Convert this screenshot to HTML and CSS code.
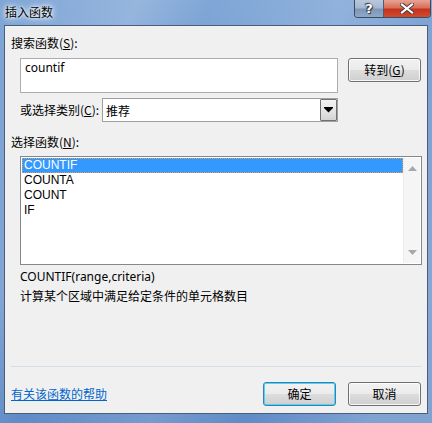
FILE: index.html
```html
<!DOCTYPE html>
<html>
<head>
<meta charset="utf-8">
<link rel="stylesheet" href="styles.css">
</head>
<body>
<div class="window">
  <div class="titlebar">
    <span class="title">插入函数</span>
    <div class="caption-btns">
      <div class="cap help"><span>?</span></div>
      <div class="cap close"><svg width="14" height="11" viewBox="0 0 14 11"><path d="M2 1.5 L12 9.5 M12 1.5 L2 9.5" stroke="#4a3a3a" stroke-width="4" stroke-linecap="square"/><path d="M2 1.5 L12 9.5 M12 1.5 L2 9.5" stroke="#fff" stroke-width="2.2" stroke-linecap="square"/></svg></div>
    </div>
  </div>
  <div class="panel">
    <div class="label top-label">搜索函数(<u>S</u>):</div>
    <div class="search-row">
      <div class="textbox">countif</div>
      <div class="btn go">转到(<u>G</u>)</div>
    </div>
    <div class="cat-row">
      <span class="cat-label">或选择类别(<u>C</u>):</span>
      <div class="select">
        <span class="select-text">推荐</span>
        <div class="drop"><svg width="9" height="6" viewBox="0 0 9 6"><path d="M0 0 H9 V1 L4.5 5.5 L0 1 Z" fill="#000"/></svg></div>
      </div>
    </div>
    <div class="label list-label">选择函数(<u>N</u>):</div>
    <div class="listbox">
      <div class="items">
        <div class="item sel">COUNTIF</div>
        <div class="item">COUNTA</div>
        <div class="item">COUNT</div>
        <div class="item">IF</div>
      </div>
      <div class="vscroll">
        <svg width="9" height="5" viewBox="0 0 9 5"><path d="M0 5 L4.5 0 L9 5 Z" fill="#a8a8a8"/></svg>
        <svg width="9" height="5" viewBox="0 0 9 5"><path d="M0 0 L4.5 5 L9 0 Z" fill="#a8a8a8"/></svg>
      </div>
    </div>
    <div class="desc">
      <div class="syntax">COUNTIF(range,criteria)</div>
      <div class="explain">计算某个区域中满足给定条件的单元格数目</div>
    </div>
    <div class="sep"></div>
    <div class="bottom-row">
      <span class="link">有关该函数的帮助</span>
      <div class="btns">
        <div class="btn ok">确定</div>
        <div class="btn">取消</div>
      </div>
    </div>
  </div>
</div>
</body>
</html>
```

FILE: styles.css
```css
html, body {
  margin: 0;
  padding: 0;
}
body {
  width: 432px;
  height: 423px;
  overflow: hidden;
  font-family: "Noto Sans", "Noto Sans CJK SC", sans-serif;
  font-size: 12px;
  color: #000;
}
.window {
  width: 432px;
  height: 423px;
  box-sizing: border-box;
  padding: 0 4px 9px 4px;
  display: flex;
  flex-direction: column;
  background:
    linear-gradient(115deg, rgba(255,255,255,0) 0%, rgba(255,255,255,0.18) 22%, rgba(255,255,255,0) 34%, rgba(255,255,255,0.14) 55%, rgba(255,255,255,0) 70%, rgba(255,255,255,0.2) 90%),
    linear-gradient(180deg, #7fa6d6 0%, #6f98cf 40%, #5f8bc6 100%);
}
.titlebar {
  height: 25px;
  flex: none;
  display: flex;
  align-items: flex-start;
  justify-content: space-between;
}
.title {
  margin: 4px 0 0 1px;
  font-family: "Noto Sans CJK SC", sans-serif;
  font-size: 12px;
  line-height: 16px;
  color: #000;
  text-shadow: 0 0 6px #fff, 0 0 3px #fff, 0 0 8px rgba(255,255,255,0.8);
}
.caption-btns {
  display: flex;
  margin-right: -3px;
  height: 17px;
  border: 1px solid #3b4b62;
  border-top: none;
  border-radius: 0 0 4px 4px;
  overflow: hidden;
}
.cap {
  height: 17px;
  display: flex;
  align-items: center;
  justify-content: center;
}
.cap.help {
  width: 28px;
  background: linear-gradient(180deg, #b9c9dc 0%, #a4b8d0 45%, #7f97b5 55%, #8ea8c6 100%);
  border-right: 1px solid #4c5c72;
}
.cap.help span {
  font-family: "DejaVu Sans", sans-serif;
  font-weight: bold;
  font-size: 13px;
  color: #fff;
  text-shadow: 0 0 1px #334, 1px 1px 1px #334, -1px -1px 1px #334;
  line-height: 17px;
}
.cap.close {
  width: 46px;
  background: linear-gradient(180deg, #e8a393 0%, #d8705c 45%, #c2341c 55%, #d24a2e 100%);
}
.panel {
  flex: 1;
  background: #f0f0f0;
  border: 1px solid #4b5d78;
  padding: 0 5px 0 6px;
  display: flex;
  flex-direction: column;
}
.label {
  font-family: "Noto Sans CJK SC", sans-serif;
  line-height: 14px;
  height: 14px;
}
.top-label {
  margin-top: 10px;
}
.search-row {
  margin-top: 8px;
  display: flex;
  align-items: flex-start;
  padding-left: 9px;
}
.textbox {
  width: 318px;
  height: 35px;
  box-sizing: border-box;
  border: 1px solid #abadb3;
  background: #fff;
  padding: 1px 0 0 4px;
  line-height: 16px;
  font-size: 12px;
}
.btn {
  width: 73px;
  height: 24px;
  box-sizing: border-box;
  border: 1px solid #707070;
  border-radius: 3px;
  background: linear-gradient(180deg, #f2f2f2 0%, #ebebeb 48%, #dddddd 52%, #cfcfcf 100%);
  box-shadow: inset 0 0 0 1px rgba(255,255,255,0.8);
  display: flex;
  align-items: center;
  justify-content: center;
  font-family: "Noto Sans CJK SC", sans-serif;
  font-size: 12px;
  line-height: 14px;
}
.btn.go {
  margin-left: 10px;
}
.cat-row {
  margin-top: 5px;
  padding-left: 9px;
  display: flex;
  align-items: center;
}
.cat-label {
  font-family: "Noto Sans CJK SC", sans-serif;
  width: 82px;
  line-height: 14px;
}
.select {
  width: 236px;
  height: 24px;
  box-sizing: border-box;
  border: 1px solid #a0a0a0;
  background: #fff;
  display: flex;
  align-items: center;
  justify-content: space-between;
}
.select-text {
  font-family: "Noto Sans CJK SC", sans-serif;
  padding-left: 3px;
}
.drop {
  width: 17px;
  height: 22px;
  box-sizing: border-box;
  border: 1px solid #707070;
  border-radius: 1px;
  background: linear-gradient(180deg, #f3f3f3 0%, #e6e6e6 50%, #d4d4d4 100%);
  display: flex;
  align-items: center;
  justify-content: center;
}
.list-label {
  margin-top: 13px;
}
.listbox {
  margin: 7px 0 0 9px;
  width: 402px;
  height: 109px;
  box-sizing: border-box;
  border: 1px solid #828790;
  background: #fff;
  display: flex;
  padding: 1px;
}
.items {
  flex: 1;
}
.item {
  height: 15px;
  line-height: 15px;
  padding-left: 2px;
  font-family: "Liberation Sans", sans-serif;
  font-size: 12px;
}
.item.sel {
  background: #3399ff;
  color: #fff;
  box-sizing: border-box;
  outline: 1px dotted #e0a050;
  outline-offset: -1px;
}
.vscroll {
  width: 17px;
  background: #f5f5f5;
  border-left: 1px solid #ececec;
  display: flex;
  flex-direction: column;
  justify-content: space-between;
  align-items: center;
  padding: 8px 0 8px;
  box-sizing: border-box;
}
.desc {
  margin: 4px 0 0 9px;
  height: 97px;
}
.syntax {
  line-height: 16px;
  font-size: 12px;
}
.explain {
  margin-top: 3px;
  font-family: "Noto Sans CJK SC", sans-serif;
  line-height: 16px;
}
.sep {
  height: 1px;
  background: #d5dfe5;
  width: 411px;
}
.bottom-row {
  margin-top: 15px;
  display: flex;
  align-items: center;
  justify-content: space-between;
}
.link {
  font-family: "Noto Sans CJK SC", sans-serif;
  color: #0066cc;
  text-decoration: underline;
  line-height: 14px;
}
.btns {
  display: flex;
  gap: 12px;
  margin-right: 1px;
}
.btn.ok {
  border-color: #3c7fb1;
  box-shadow: inset 0 0 0 1px #48d4fb;
}
```
